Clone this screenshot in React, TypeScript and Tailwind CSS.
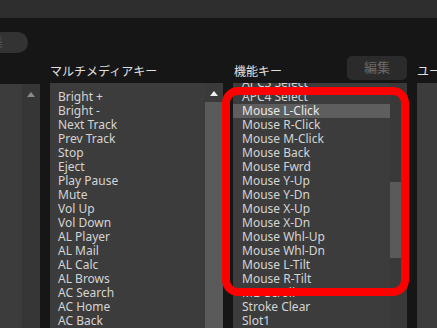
const middleItems = [
  "Bright +",
  "Bright -",
  "Next Track",
  "Prev Track",
  "Stop",
  "Eject",
  "Play Pause",
  "Mute",
  "Vol Up",
  "Vol Down",
  "AL Player",
  "AL Mail",
  "AL Calc",
  "AL Brows",
  "AC Search",
  "AC Home",
  "AC Back",
];

const functionItems = [
  "APC3 Select",
  "APC4 Select",
  "Mouse L-Click",
  "Mouse R-Click",
  "Mouse M-Click",
  "Mouse Back",
  "Mouse Fwrd",
  "Mouse Y-Up",
  "Mouse Y-Dn",
  "Mouse X-Up",
  "Mouse X-Dn",
  "Mouse Whl-Up",
  "Mouse Whl-Dn",
  "Mouse L-Tilt",
  "Mouse R-Tilt",
  "MB-Scroll",
  "Stroke Clear",
  "Slot1",
];

const UpArrow = ({ color }: { color: string }) => (
  <svg width="8" height="5" viewBox="0 0 8 5" className="block">
    <path d="M0 5 L4 0 L8 5 Z" fill={color} />
  </svg>
);

const App = () => {
  return (
    <div
      className="relative w-[437px] h-[328px] overflow-hidden bg-[#161616] text-[12px] text-[#d4d4d4]"
      style={{ fontFamily: '"Noto Sans", "Noto Sans CJK JP", sans-serif' }}
    >
      {/* top bar */}
      <div className="h-[18px] bg-[#2e2e2e]" />

      {/* pill */}
      <div className="pt-[14px]">
        <div className="-ml-[30px] w-[58px] h-[21px] rounded-full bg-[#333333] flex items-center justify-end pr-[25px] text-[12px] text-[#555] leading-none">
          集
        </div>
      </div>

      <div className="flex h-[275px]">
        {/* left column */}
        <div className="w-[40px] shrink-0 flex flex-col">
          <div className="h-[31px]" />
          <div className="flex-1 flex">
            <div className="w-[22px] bg-[#3c3c3c]" />
            <div className="w-[18px] bg-[#363636] flex justify-center pt-[8px]">
              <UpArrow color="#8a8a8a" />
            </div>
          </div>
        </div>

        {/* multimedia keys */}
        <div className="ml-[10px] w-[173px] shrink-0 flex flex-col">
          <div className="h-[30px] flex items-end pb-[3px]">
            <span className="leading-[16px] text-[#e0e0e0]">マルチメディアキー</span>
          </div>
          <div className="flex-1 flex overflow-hidden">
            <div className="flex-1 bg-[#3c3c3c] pt-[7px] pl-[8px]">
              {middleItems.map((item) => (
                <div key={item} className="h-[14px] leading-[14px] whitespace-nowrap">
                  {item}
                </div>
              ))}
            </div>
            <div className="w-[18px] bg-[#3a3a3a] flex flex-col">
              <div className="h-[19px] flex justify-center pt-[8px]">
                <UpArrow color="#f0f0f0" />
              </div>
              <div className="flex-1 bg-[#5a5a5a]" />
            </div>
          </div>
        </div>

        {/* function keys */}
        <div className="ml-[10px] w-[174px] shrink-0 flex flex-col">
          <div className="h-[30px] flex items-end justify-between pb-[3px]">
            <span className="ml-[1px] leading-[16px] text-[#e0e0e0]">機能キー</span>
            <button className="w-[60px] h-[24px] rounded-[5px] bg-[#2b2b2b] text-[13px] text-[#6a6a6a]">
              編集
            </button>
          </div>
          <div className="flex-1 flex overflow-hidden">
            <div className="flex-1 bg-[#3c3c3c] overflow-hidden">
              <div className="-mt-[7px]">
                {functionItems.map((item) => (
                  <div
                    key={item}
                    className={
                      item === "Mouse L-Click"
                        ? "h-[14px] leading-[14px] pl-[9px] whitespace-nowrap bg-[#5e5e5e] text-[#e8e8e8]"
                        : "h-[14px] leading-[14px] pl-[9px] whitespace-nowrap"
                    }
                  >
                    {item}
                  </div>
                ))}
              </div>
            </div>
            <div className="w-[17px] bg-[#393939] flex flex-col">
              <div className="h-[99px]" />
              <div className="h-[76px] bg-[#5a5a5a]" />
            </div>
          </div>
        </div>

        {/* user column */}
        <div className="ml-[10px] flex-1 min-w-0 flex flex-col">
          <div className="h-[30px] flex items-end pb-[3px] whitespace-nowrap overflow-hidden">
            <span className="leading-[16px] text-[#e0e0e0]">ユーザー</span>
          </div>
          <div className="flex-1 bg-[#3c3c3c]" />
        </div>
      </div>

      {/* red annotation */}
      <div className="absolute left-[222px] top-[87px] w-[187px] h-[209px] border-[8px] border-[#ff0000] rounded-[16px]" />
    </div>
  );
};

export default App;
